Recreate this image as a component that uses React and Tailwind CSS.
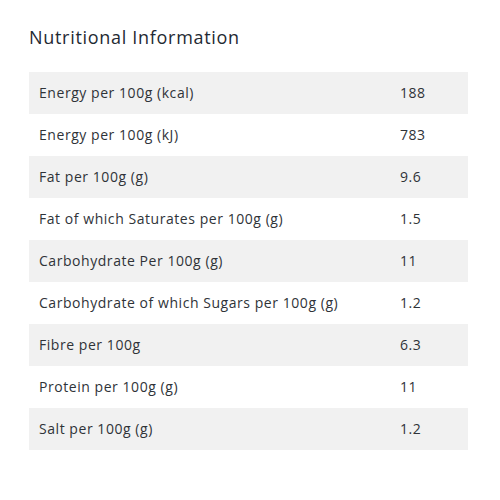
import React from 'react';

const rows = [
  ['Energy per 100g (kcal)', '188'],
  ['Energy per 100g (kJ)', '783'],
  ['Fat per 100g (g)', '9.6'],
  ['Fat of which Saturates per 100g (g)', '1.5'],
  ['Carbohydrate Per 100g (g)', '11'],
  ['Carbohydrate of which Sugars per 100g (g)', '1.2'],
  ['Fibre per 100g', '6.3'],
  ['Protein per 100g (g)', '11'],
  ['Salt per 100g (g)', '1.2'],
];

export default function App() {
  return (
    <div className="w-[500px] h-[500px] bg-white pl-[29px] pr-[32px] pt-[25px] text-[#2f3338] font-['Open_Sans',sans-serif]">
      <h2 className="text-[18px] leading-[24px] tracking-[0.7px] text-[#1f2a33] mb-[23px]">Nutritional Information</h2>
      <div className="flex flex-col">
        {rows.map(([label, value], i) => (
          <div
            key={label}
            className={`flex items-center h-[42px] text-[14px] leading-[20px] tracking-[0.55px] ${i % 2 === 0 ? 'bg-[#f1f1f1]' : 'bg-white'}`}
          >
            <div className="w-[361px] pl-[10px]">{label}</div>
            <div className="pl-[10px]">{value}</div>
          </div>
        ))}
      </div>
    </div>
  );
}
